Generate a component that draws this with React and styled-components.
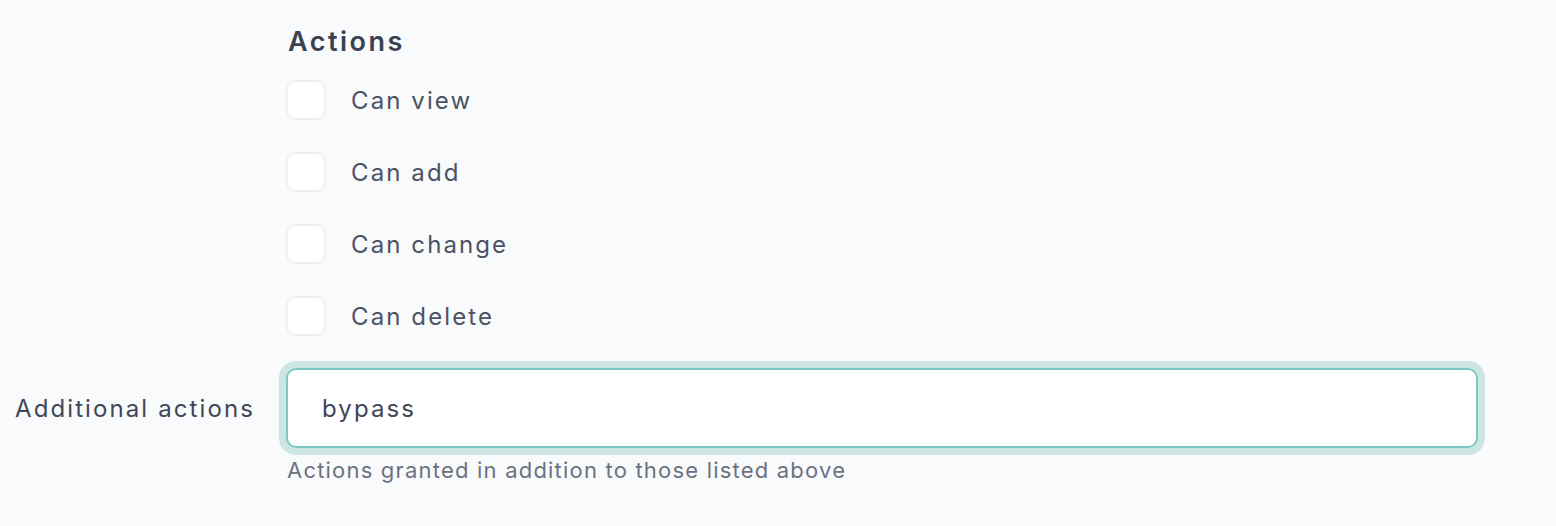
import React, { useState } from "react";
import styled, { createGlobalStyle } from "styled-components";

const GlobalStyle = createGlobalStyle`
  html, body {
    margin: 0;
    padding: 0;
    background: #f9fafc;
  }
  body {
    font-family: Inter, "Noto Sans", sans-serif;
    color: #3f4757;
  }
`;

const actions = ["Can view", "Can add", "Can change", "Can delete"];

const App = () => {
  const [checked, setChecked] = useState({});
  const [extra, setExtra] = useState("bypass");

  const toggle = (name) => {
    setChecked({ ...checked, [name]: !checked[name] });
  };

  return (
    <Page>
      <GlobalStyle />
      <Row>
        <Spacer />
        <Group>
          <Heading>Actions</Heading>
          <List>
            {actions.map((name) => (
              <CheckRow key={name} onClick={() => toggle(name)}>
                <Box $checked={!!checked[name]} />
                <CheckLabel>{name}</CheckLabel>
              </CheckRow>
            ))}
          </List>
        </Group>
      </Row>
      <FieldRow>
        <FieldLabel htmlFor="extra">Additional actions</FieldLabel>
        <Field>
          <Ring>
            <Input
              id="extra"
              autoFocus
              value={extra}
              onChange={(e) => setExtra(e.target.value)}
            />
          </Ring>
          <Help>Actions granted in addition to those listed above</Help>
        </Field>
      </FieldRow>
    </Page>
  );
};

export default App;

const Page = styled.div`
  width: 1556px;
  height: 526px;
  padding-top: 22px;
  box-sizing: border-box;
`;

const Row = styled.div`
  display: grid;
  grid-template-columns: 286px 1fr;
`;

const Spacer = styled.div``;

const Group = styled.div`
  display: flex;
  flex-direction: column;
`;

const Heading = styled.h3`
  margin: 0 0 0 2px;
  font-size: 27px;
  line-height: 40px;
  font-weight: 600;
  color: #3a4252;
  letter-spacing: 2.5px;
`;

const List = styled.div`
  display: flex;
  flex-direction: column;
  gap: 32px;
  margin-top: 18px;
`;

const CheckRow = styled.label`
  display: flex;
  align-items: center;
  gap: 25px;
  height: 40px;
  cursor: pointer;
`;

const Box = styled.span`
  width: 40px;
  height: 40px;
  box-sizing: border-box;
  border: 2px solid #eef0f3;
  border-radius: 9px;
  background: ${(p) => (p.$checked ? "#79c9c3" : "#ffffff")};
`;

const CheckLabel = styled.span`
  font-size: 24px;
  color: #4a5263;
  letter-spacing: 2.1px;
`;

const FieldRow = styled.div`
  display: grid;
  grid-template-columns: 286px 1fr;
  margin-top: 32px;
`;

const FieldLabel = styled.label`
  padding-left: 15px;
  height: 80px;
  display: flex;
  align-items: center;
  font-size: 24px;
  color: #3f4757;
  letter-spacing: 2.1px;
`;

const Field = styled.div`
  display: flex;
  flex-direction: column;
  width: 1192px;
`;

const Ring = styled.div`
  border-radius: 10px;
  box-shadow: 0 0 0 7px #cde5e3;
`;

const Input = styled.input`
  display: block;
  width: 100%;
  height: 80px;
  box-sizing: border-box;
  padding: 0 34px;
  border: 2px solid #79c9c3;
  border-radius: 10px;
  background: #ffffff;
  font-family: Inter, "Noto Sans", sans-serif;
  font-size: 24px;
  letter-spacing: 2.1px;
  color: #3f4757;
  outline: none;
  caret-color: #9aa3ad;
`;

const Help = styled.div`
  margin-top: 9px;
  margin-left: 1px;
  font-size: 22px;
  color: #6b7280;
  letter-spacing: 1.2px;
`;
